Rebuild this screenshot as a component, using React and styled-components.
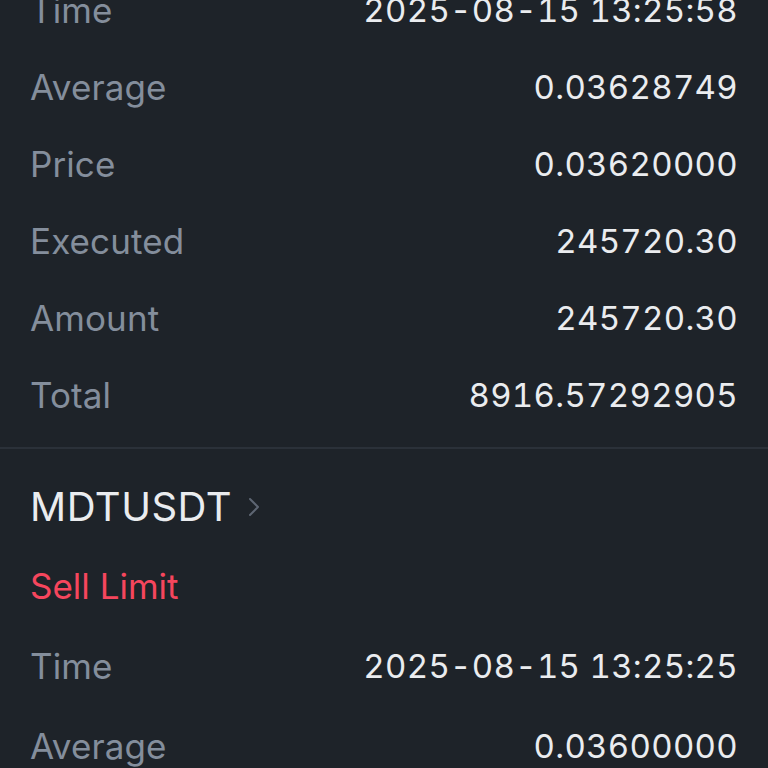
import React from "react";
import styled, { createGlobalStyle } from "styled-components";

const Global = createGlobalStyle`
  html, body { margin: 0; padding: 0; background: #1e2329; }
  body { font-family: Inter, "Open Sans", "Liberation Sans", sans-serif; overflow: hidden; }
  #root { height: 768px; overflow: hidden; }
`;

const Page = styled.div`
  width: 768px;
  margin-top: -29px;
  background: #1e2329;
`;

const Section = styled.section`
  display: flex;
  flex-direction: column;
  padding: ${(p) => p.$top || 0}px 30px ${(p) => p.$bottom || 0}px;
  border-bottom: ${(p) => (p.$divider ? "2px solid #2b3139" : "none")};
`;

const Row = styled.div`
  display: flex;
  align-items: center;
  justify-content: space-between;
  height: ${(p) => p.$h || 77}px;
`;

const Label = styled.span`
  color: #848e9c;
  font-size: 35px;
  letter-spacing: 0.1px;
`;

const Value = styled.span`
  color: #eaecef;
  font-size: 33px;
  letter-spacing: 0.3px;
  font-variant-numeric: tabular-nums;
`;

const Header = styled.div`
  display: flex;
  align-items: center;
  gap: 16px;
  height: ${(p) => p.$h}px;
`;

const Symbol = styled.span`
  color: #eaecef;
  font-size: 40px;
  letter-spacing: 0.5px;
`;

const Chevron = styled.svg`
  width: 12px;
  height: 20px;
  margin-top: 2px;
`;

const Side = styled.div`
  display: flex;
  align-items: center;
  height: ${(p) => p.$h}px;
  color: #f6465d;
  font-size: 35px;
`;

const first = [
  ["Time", "2025-08-15 13:25:58"],
  ["Average", "0.03628749"],
  ["Price", "0.03620000"],
  ["Executed", "245720.30"],
  ["Amount", "245720.30"],
  ["Total", "8916.57292905"],
];

const second = [
  ["Time", "2025-08-15 13:25:25"],
  ["Average", "0.03600000"],
  ["Price", "0.03600000"],
];

export default function App() {
  return (
    <>
      <Global />
      <Page>
        <Section $divider $bottom={14}>
          {first.map(([l, v]) => (
            <Row key={l}>
              <Label>{l}</Label>
              <Value>{v}</Value>
            </Row>
          ))}
        </Section>
        <Section $top={17}>
          <Header $h={80}>
            <Symbol>MDTUSDT</Symbol>
            <Chevron viewBox="0 0 12 20">
              <path d="M2 2 L10 10 L2 18" fill="none" stroke="#5e6673" strokeWidth="2" strokeLinecap="round" strokeLinejoin="round" />
            </Chevron>
          </Header>
          <Side $h={80}>Sell Limit</Side>
          {second.map(([l, v]) => (
            <Row key={l} $h={80}>
              <Label>{l}</Label>
              <Value>{v}</Value>
            </Row>
          ))}
        </Section>
      </Page>
    </>
  );
}
